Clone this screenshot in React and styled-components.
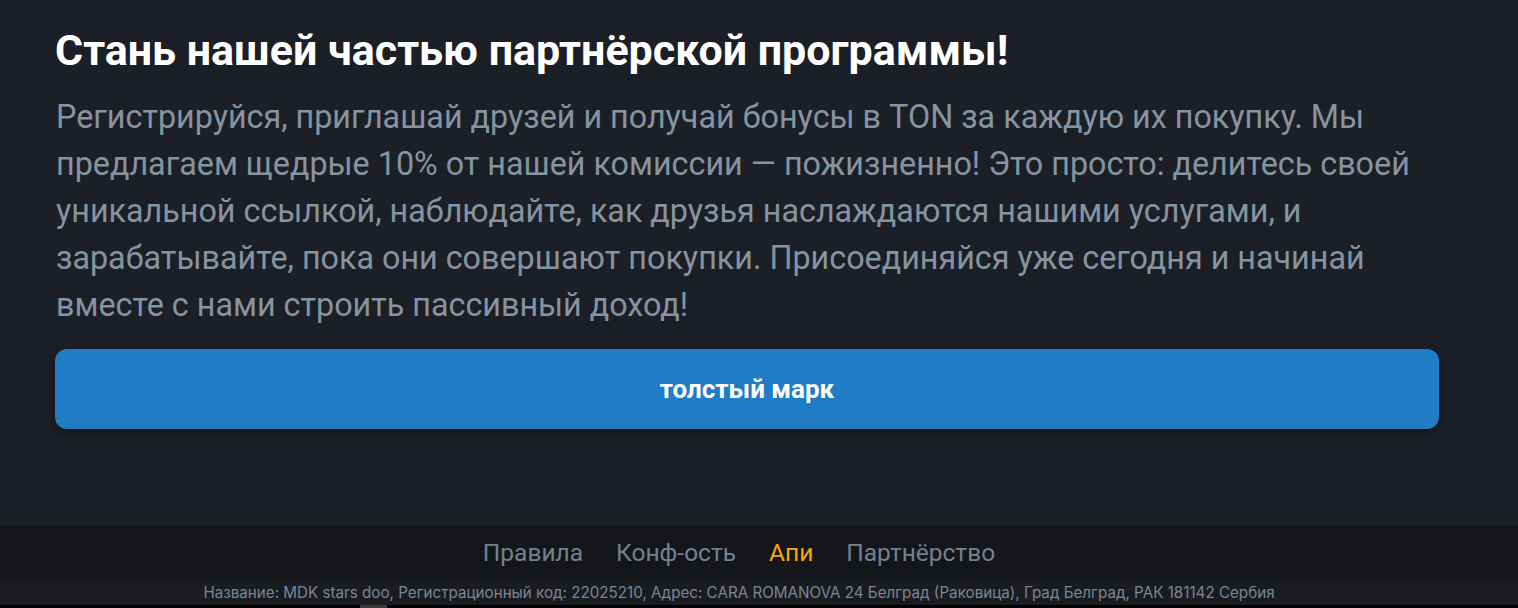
import React from 'react'
import styled, { createGlobalStyle } from 'styled-components'

const GlobalStyle = createGlobalStyle`
    html, body {
        margin: 0;
        padding: 0;
        background: #1c1f26;
        font-family: Roboto, "Liberation Sans", sans-serif;
    }
`;

const Page = styled.div`
    display: flex;
    flex-direction: column;
    height: 608px;
    overflow: hidden;
`;

const Main = styled.main`
    flex: 1;
    padding: 24px 79px 0 55px;
    display: flex;
    flex-direction: column;
`;

const Title = styled.h1`
    margin: 0;
    font-size: 43px;
    line-height: 52px;
    font-weight: 700;
    color: #ffffff;
`;

const Text = styled.p`
    margin: 18px 0 0 1px;
    font-size: 32.3px;
    line-height: 47px;
    color: #8693a0;
`;

const Button = styled.button`
    margin-top: 20px;
    height: 80px;
    flex-shrink: 0;
    border: none;
    border-radius: 12px;
    background: #207cc4;
    color: #ffffff;
    font-family: Roboto, "Liberation Sans", sans-serif;
    font-size: 26px;
    font-weight: 700;
    box-shadow: 0 4px 8px rgba(0, 0, 0, 0.35);
    cursor: pointer;
`;

const Footer = styled.footer`
    background: #141619;
`;

const Links = styled.nav`
    height: 55px;
    display: flex;
    align-items: center;
    justify-content: center;
    gap: 33px;
    padding-right: 40px;
`;

const Link = styled.a`
    font-size: 24.5px;
    color: ${props => props.$active ? '#f6a70b' : '#73818f'};
    text-decoration: none;
`;

const Legal = styled.div`
    height: 25px;
    background: #1b1c20;
    display: flex;
    align-items: center;
    justify-content: center;
    padding-right: 40px;
    font-family: Inter, Roboto, sans-serif;
    font-size: 15.2px;
    color: #7a8793;
    white-space: nowrap;
`;

const BottomBar = styled.div`
    height: 3px;
    background: #000000;
    position: relative;
`;

const Thumb = styled.div`
    position: absolute;
    left: 360px;
    top: 0;
    width: 27px;
    height: 3px;
    background: #3a3b3e;
`;

const links = ['Правила', 'Конф-ость', 'Апи', 'Партнёрство'];

const App = () => {
    return (
        <Page>
            <GlobalStyle />
            <Main>
                <Title>Стань нашей частью партнёрской программы!</Title>
                <Text>
                    Регистрируйся, приглашай друзей и получай бонусы в TON за каждую их покупку. Мы предлагаем щедрые 10% от нашей комиссии — пожизненно! Это просто: делитесь своей уникальной ссылкой, наблюдайте, как друзья наслаждаются нашими услугами, и зарабатывайте, пока они совершают покупки. Присоединяйся уже сегодня и начинай вместе с нами строить пассивный доход!
                </Text>
                <Button>толстый марк</Button>
            </Main>
            <Footer>
                <Links>
                    {links.map(link => (
                        <Link key={link} href="#" $active={link === 'Апи'}>{link}</Link>
                    ))}
                </Links>
                <Legal>
                    Название: MDK stars doo, Регистрационный код: 22025210, Адрес: CARA ROMANOVA 24 Белград (Раковица), Град Белград, РАК 181142 Сербия
                </Legal>
            </Footer>
            <BottomBar>
                <Thumb />
            </BottomBar>
        </Page>
    )
}

export default App
